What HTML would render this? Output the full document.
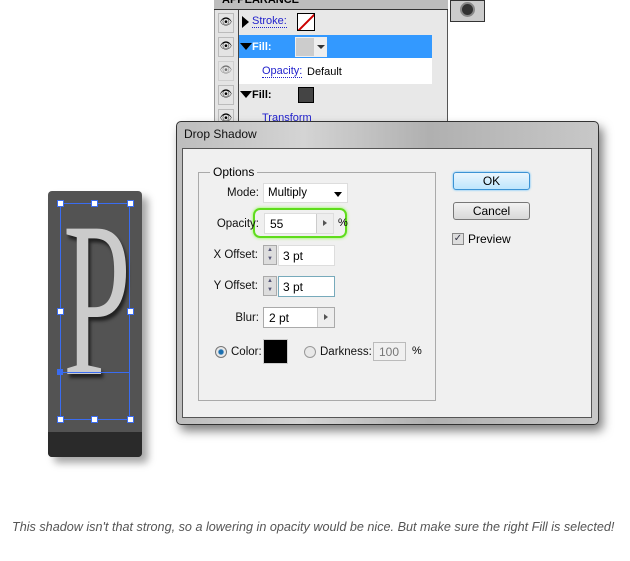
<!DOCTYPE html>
<html><head><style>
*{margin:0;padding:0;box-sizing:border-box}
body{width:630px;height:561px;background:#fff;position:relative;overflow:hidden;font-family:"Liberation Sans",sans-serif}
.a{position:absolute}
.t{font-size:11px;color:#000}
.r{position:absolute;text-align:right;font-size:11.5px;color:#111;white-space:nowrap}
.lnk{color:#2222cc;border-bottom:1px dotted #2222cc;line-height:11px}
.eye{position:absolute;left:5px;width:16px;height:20px;border:1px solid #bbb;background:#e4e4e4;font-size:10px;text-align:center;line-height:18px}
.box{position:absolute;background:#fff;border:1px solid #bbb}
.h{position:absolute;width:7px;height:7px;background:#fff;border:1px solid #3a6cf0}
</style></head><body>

<div class="a" style="left:214px;top:0;width:234px;height:125px;background:#e8e8e8;border-left:1px solid #999;border-right:1px solid #555"></div>
<div class="a" style="left:214px;top:0;width:234px;height:10px;background:#bdbdbd;border-bottom:1px solid #333"></div>
<div class="a t" style="left:222px;top:-6px;font-weight:bold;font-size:11px">APPEARANCE</div>
<div class="a" style="left:238px;top:10px;width:1px;height:115px;background:#444"></div>
<div class="a" style="left:239px;top:35px;width:193px;height:23px;background:#3399ff"></div>
<div class="a" style="left:239px;top:58px;width:193px;height:26px;background:#fff"></div>
<div class="a" style="left:215px;top:10px;width:23px;height:115px;background:#e4e4e4">
<div class="eye" style="top:3px;left:3px">👁</div><div class="eye" style="top:27px;left:3px">👁</div><div class="eye" style="top:51px;left:3px;opacity:.5">👁</div><div class="eye" style="top:75px;left:3px">👁</div><div class="eye" style="top:99px;left:3px">👁</div></div>
<div class="a" style="left:242px;top:16px;width:0;height:0;border-left:7px solid #000;border-top:6px solid transparent;border-bottom:6px solid transparent"></div>
<div class="a t lnk" style="left:252px;top:16px">Stroke:</div>
<div class="a" style="left:297px;top:13px;width:18px;height:18px;border:1px solid #000;background:#fff;overflow:hidden"><div style="position:absolute;left:-3px;top:7px;width:24px;height:2px;background:#c00;transform:rotate(-45deg)"></div></div>
<div class="a" style="left:240px;top:43px;border-top:7px solid #000;border-left:6px solid transparent;border-right:6px solid transparent"></div>
<div class="a t" style="left:252px;top:41px;color:#fff;font-weight:bold">Fill:</div>
<div class="a" style="left:295px;top:37px;width:20px;height:20px;background:#ccc;border:1px solid #eee"></div>
<div class="a" style="left:315px;top:37px;width:12px;height:20px;background:#eee"><div style="margin:8px 2px;border-top:4px solid #333;border-left:4px solid transparent;border-right:4px solid transparent;width:0"></div></div>
<div class="a t lnk" style="left:262px;top:66px">Opacity:</div>
<div class="a t" style="left:307px;top:66px">Default</div>
<div class="a" style="left:240px;top:91px;border-top:7px solid #000;border-left:6px solid transparent;border-right:6px solid transparent"></div>
<div class="a t" style="left:252px;top:89px;font-weight:bold">Fill:</div>
<div class="a" style="left:298px;top:87px;width:16px;height:16px;background:#444;border:1px solid #000"></div>
<div class="a t lnk" style="left:262px;top:113px">Transform</div>
<div class="a" style="left:450px;top:0;width:35px;height:22px;border:1px solid #333;background:#ccc"><div style="margin:1px 9px;width:15px;height:15px;border-radius:50%;background:#333;border:2px solid #888"></div></div>

<div class="a" style="left:48px;top:191px;width:94px;height:266px;background:#535353;border-radius:4px;box-shadow:6px 6px 8px rgba(0,0,0,.35)"></div>
<div class="a" style="left:48px;top:432px;width:94px;height:25px;background:#2a2a2a;border-radius:0 0 4px 4px"></div>
<div class="a" style="left:63px;top:189px;font-family:'Liberation Serif',serif;font-size:222px;color:#cbcbcb;line-height:1;text-shadow:4px 4px 4px rgba(0,0,0,.6);transform:scaleX(.55);transform-origin:left">P</div>
<div class="a" style="left:60px;top:203px;width:70px;height:217px;border:1px solid #3a6cf0"></div>
<div class="a" style="left:60px;top:372px;width:70px;height:1px;background:#3a6cf0"></div>
<div class="h" style="left:57px;top:200px"></div><div class="h" style="left:91px;top:200px"></div><div class="h" style="left:127px;top:200px"></div>
<div class="h" style="left:57px;top:308px"></div><div class="h" style="left:127px;top:308px"></div>
<div class="h" style="left:57px;top:416px"></div><div class="h" style="left:91px;top:416px"></div><div class="h" style="left:127px;top:416px"></div>
<div class="a" style="left:57px;top:369px;width:6px;height:6px;background:#3a6cf0"></div>

<div class="a" style="left:176px;top:121px;width:423px;height:304px;border-radius:5px;border:1px solid #333;background:linear-gradient(90deg,#bdbdbd,#d4d4d4 30%,#b0b0b0 60%,#c8c8c8);box-shadow:4px 6px 10px rgba(0,0,0,.5)"></div>
<div class="a" style="left:184px;top:127px;font-size:12px;color:#111">Drop Shadow</div>
<div class="a" style="left:182px;top:148px;width:410px;height:270px;background:#f0f0f0;border:1px solid #555"></div>
<div class="a" style="left:198px;top:172px;width:238px;height:229px;border:1px solid #aaa"></div>
<div class="a t" style="left:210px;top:165px;background:#f0f0f0;padding:0 3px;font-size:12px">Options</div>

<div class="r" style="right:371px;top:187px">Mode:</div>
<div class="box" style="left:263px;top:183px;width:85px;height:20px;border-color:#ddd"><span class="t" style="position:absolute;left:4px;top:3px;font-size:11.5px">Multiply</span><div style="position:absolute;right:5px;top:8px;border-top:5px solid #000;border-left:4px solid transparent;border-right:4px solid transparent"></div></div>

<div class="a" style="left:253px;top:208px;width:94px;height:30px;border:2px solid #5fdc1c;border-radius:7px;box-shadow:0 0 3px #8f4"></div>
<div class="r" style="right:371px;top:218px">Opacity:</div>
<div class="box" style="left:264px;top:213px;width:70px;height:21px;border-color:#ddd"><span class="t" style="position:absolute;left:5px;top:3px;font-size:12px">55</span><div style="position:absolute;right:0;top:0;width:17px;height:19px;background:#eee;border-left:1px solid #ccc"><div style="margin:6px 6px;border-left:4px solid #555;border-top:3px solid transparent;border-bottom:3px solid transparent;width:0"></div></div></div>
<div class="a t" style="left:338px;top:217px">%</div>

<div class="r" style="right:372px;top:249px">X Offset:</div>
<div class="a" style="left:263px;top:245px;width:14px;height:20px;background:#ddd;border:1px solid #aaa;font-size:6px;color:#557;text-align:center;line-height:9px">▲<br>▼</div>
<div class="box" style="left:278px;top:245px;width:57px;height:21px;border-color:#ddd"><span class="t" style="position:absolute;left:4px;top:3px;font-size:12px">3 pt</span></div>

<div class="r" style="right:372px;top:280px">Y Offset:</div>
<div class="a" style="left:263px;top:276px;width:14px;height:20px;background:#ddd;border:1px solid #aaa;font-size:6px;color:#557;text-align:center;line-height:9px">▲<br>▼</div>
<div class="box" style="left:278px;top:276px;width:57px;height:21px;border-color:#7ab"><span class="t" style="position:absolute;left:4px;top:3px;font-size:12px">3 pt</span></div>

<div class="r" style="right:371px;top:312px">Blur:</div>
<div class="box" style="left:263px;top:307px;width:72px;height:21px;border-color:#aaa"><span class="t" style="position:absolute;left:5px;top:3px;font-size:12px">2 pt</span><div style="position:absolute;right:0;top:0;width:17px;height:19px;background:#eee;border-left:1px solid #ccc"><div style="margin:6px 6px;border-left:4px solid #555;border-top:3px solid transparent;border-bottom:3px solid transparent;width:0"></div></div></div>

<div class="a" style="left:215px;top:346px;width:12px;height:12px;border-radius:50%;border:1px solid #777;background:radial-gradient(#1a6fb0 30%,#e8e8e8 45%)"></div>
<div class="a t" style="left:231px;top:346px;font-size:11.5px;color:#111">Color:</div>
<div class="a" style="left:263px;top:339px;width:25px;height:25px;background:#000;border:1px solid #ccc"></div>
<div class="a" style="left:304px;top:346px;width:12px;height:12px;border-radius:50%;border:1px solid #999;background:#e8e8e8"></div>
<div class="a t" style="left:320px;top:346px;font-size:11.5px;color:#111">Darkness:</div>
<div class="a" style="left:373px;top:342px;width:33px;height:19px;border:1px solid #bbb;background:#f0f0f0;font-size:12px;color:#777;padding:2px 0 0 5px">100</div>
<div class="a t" style="left:412px;top:345px">%</div>

<div class="a" style="left:453px;top:172px;width:77px;height:18px;border:1px solid #3c93d4;border-radius:3px;background:linear-gradient(#eaf6fd,#bee6fd);box-shadow:0 0 2px #5bf;font-size:12px;text-align:center;line-height:16px">OK</div>
<div class="a" style="left:453px;top:202px;width:77px;height:18px;border:1px solid #777;border-radius:3px;background:linear-gradient(#f2f2f2,#d8d8d8);font-size:12px;text-align:center;line-height:16px">Cancel</div>
<div class="a" style="left:452px;top:233px;width:12px;height:12px;border:1px solid #888;background:#ddd;font-size:10px;color:#334;line-height:10px;text-align:center">✓</div>
<div class="a t" style="left:468px;top:232px;font-size:12px">Preview</div>

<div class="a" style="left:12px;top:520px;font-size:12.5px;font-style:italic;color:#555;white-space:nowrap;transform:scaleX(1.01);transform-origin:left">This shadow isn't that strong, so a lowering in opacity would be nice. But make sure the right Fill is selected!</div>
</body></html>
